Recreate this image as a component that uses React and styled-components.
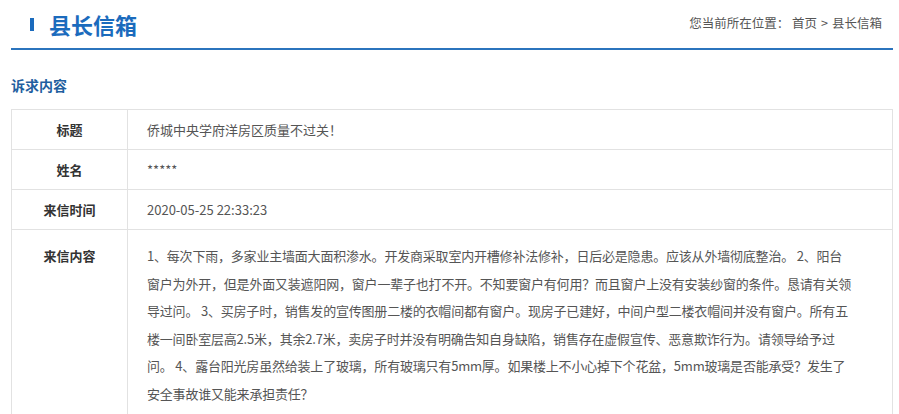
import React from "react";
import styled, { createGlobalStyle } from "styled-components";

const GlobalStyle = createGlobalStyle`
  body {
    margin: 0;
    background: #fff;
    font-family: "Noto Sans CJK SC", "Noto Sans", "Liberation Sans", sans-serif;
  }
`;

const Page = styled.div`
  padding: 0 6px 0 11px;
`;

const Header = styled.div`
  display: flex;
  align-items: center;
  justify-content: space-between;
  height: 48px;
  border-bottom: 2px solid #2b74bd;
`;

const Title = styled.h1`
  display: flex;
  align-items: center;
  margin: 0 0 0 19px;
  font-size: 22px;
  font-weight: bold;
  color: #1b6bbd;

  &::before {
    content: "";
    width: 4px;
    height: 13px;
    margin-right: 15px;
    background: #1b6bbd;
  }
`;

const Crumbs = styled.div`
  margin-right: 11px;
  margin-top: -4px;
  font-size: 12.5px;
  color: #555;

  span {
    margin: 0 4px;
  }
`;

const Section = styled.h2`
  margin: 25px 0 14px;
  font-size: 14px;
  font-weight: bold;
  color: #1f5fa0;
  line-height: 20px;
`;

const Table = styled.div`
  border: 1px solid #e2e2e2;
  border-bottom: none;
`;

const Row = styled.div`
  display: grid;
  grid-template-columns: 116px 1fr;
  border-bottom: 1px solid #e2e2e2;
  min-height: ${(p) => (p.$tall ? "190px" : "39px")};
`;

const Label = styled.div`
  display: flex;
  align-items: ${(p) => (p.$top ? "flex-start" : "center")};
  justify-content: center;
  padding-top: ${(p) => (p.$top ? "12px" : "0")};
  border-right: 1px solid #e2e2e2;
  font-size: 13px;
  font-weight: bold;
  color: #333;
  line-height: 27.5px;
`;

const Value = styled.div`
  display: flex;
  align-items: center;
  padding: 0 20px 0 19px;
  font-size: 13px;
  color: #555;
`;

const Content = styled.div`
  padding: 12px 20px 12px 19px;
  font-size: 13px;
  line-height: 27.5px;
  letter-spacing: -0.2px;
  color: #555;
  overflow: hidden;
`;

const Line = styled.div`
  white-space: nowrap;
`;

const letter = [
  "1、每次下雨，多家业主墙面大面积渗水。开发商采取室内开槽修补法修补，日后必是隐患。应该从外墙彻底整治。 2、阳台",
  "窗户为外开，但是外面又装遮阳网，窗户一辈子也打不开。不知要窗户有何用？而且窗户上没有安装纱窗的条件。恳请有关领",
  "导过问。 3、买房子时，销售发的宣传图册二楼的衣帽间都有窗户。现房子已建好，中间户型二楼衣帽间并没有窗户。所有五",
  "楼一间卧室层高2.5米，其余2.7米，卖房子时并没有明确告知自身缺陷，销售存在虚假宣传、恶意欺诈行为。请领导给予过",
  "问。 4、露台阳光房虽然给装上了玻璃，所有玻璃只有5mm厚。如果楼上不小心掉下个花盆，5mm玻璃是否能承受？发生了",
  "安全事故谁又能来承担责任？",
];

const fields = [
  { label: "标题", value: "侨城中央学府洋房区质量不过关！" },
  { label: "姓名", value: "*****" },
  { label: "来信时间", value: "2020-05-25 22:33:23" },
];

export default function App() {
  return (
    <Page>
      <GlobalStyle />
      <Header>
        <Title>县长信箱</Title>
        <Crumbs>
          您当前所在位置： 首页<span>&gt;</span>县长信箱
        </Crumbs>
      </Header>
      <Section>诉求内容</Section>
      <Table>
        {fields.map((f) => (
          <Row key={f.label}>
            <Label>{f.label}</Label>
            <Value>{f.value}</Value>
          </Row>
        ))}
        <Row $tall>
          <Label $top>来信内容</Label>
          <Content>
            {letter.map((l, i) => (
              <Line key={i}>{l}</Line>
            ))}
          </Content>
        </Row>
      </Table>
    </Page>
  );
}
